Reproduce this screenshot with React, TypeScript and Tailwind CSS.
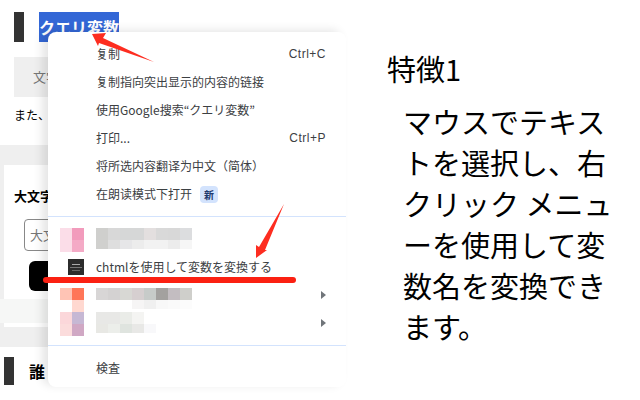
import React from 'react';

const font = { fontFamily: '"Noto Sans CJK JP", sans-serif' };

const Row = ({ label, shortcut, badge }: { label: string; shortcut?: string; badge?: string }) => (
  <div className="flex h-[28px] items-center justify-between pl-[48px] pr-[20px] text-[12px] text-[#3c4043]">
    <span className="flex items-center gap-[8px]">
      {label}
      {badge && (
        <span className="rounded-[4px] bg-[#d3e3fd] px-[4px] text-[10px] leading-[17px] font-bold text-[#1f3a6e]">{badge}</span>
      )}
    </span>
    {shortcut && <span className="font-['Liberation_Sans'] text-[12px] tracking-[0.5px]">{shortcut}</span>}
  </div>
);

const Mosaic = ({ colors, height }: { colors: string[]; height: number }) => (
  <div className="flex">
    {colors.map((c, i) => (
      <div key={i} style={{ background: c, width: 12, height }} />
    ))}
  </div>
);

const Icon = ({ colors }: { colors: string[] }) => (
  <div className="ml-[12px] flex w-[24px] flex-wrap">
    {colors.map((c, i) => (
      <div key={i} className="h-[12px] w-[12px]" style={{ background: c }} />
    ))}
  </div>
);

const BlurRow = ({ icon, top, bottom, arrow, pad }: { icon: string[]; top: string[]; bottom: string[]; arrow?: boolean; pad: string }) => (
  <div className={`relative flex h-[28px] items-start gap-[12px] ${pad}`}>
    <Icon colors={icon} />
    <div>
      <Mosaic colors={top} height={12} />
      <Mosaic colors={bottom} height={9} />
    </div>
    {arrow && (
      <div className="absolute right-[20px] top-[10px] h-0 w-0 border-y-[4px] border-l-[5px] border-y-transparent border-l-[#70757a]" />
    )}
  </div>
);

export default function App() {
  return (
    <div className="flex h-[400px] w-[640px] overflow-hidden bg-white text-black" style={font}>
      <div className="relative h-full w-[370px] shrink-0 overflow-hidden">
        {/* page behind the menu */}
        <div className="flex items-center gap-[15px] pl-[14px] pt-[12px]">
          <div className="h-[30px] w-[10px] bg-[#333]" />
          <span className="bg-[#3367d6] text-[16px] font-bold leading-[30px] text-white">クエリ変数</span>
        </div>
        <div className="ml-[14px] mt-[15px] flex h-[40px] w-[120px] items-center bg-[#efefef] pl-[19px] text-[13px] text-[#777]">文字</div>
        <p className="ml-[14px] mt-[8px] text-[12px] leading-[20px]">また、</p>
        <div className="mt-[20px] h-[202px] w-[200px] bg-[#efefef] pl-[4px] pt-[20px]">
          <div className="relative h-[162px] w-[180px] bg-white pl-[10px] pt-[22px]">
            <p className="text-[13px] font-bold leading-[18px]">大文字</p>
            <div className="ml-[10px] mt-[14px] flex h-[32px] w-[60px] items-center rounded-[4px] border border-[#888] pl-[5px] text-[13px] text-[#777]">大文</div>
            <div className="ml-[15px] mt-[10px] h-[30px] w-[40px] rounded-[6px] bg-black" />
            {/* smudge over the bottom of the card */}
            <div className="absolute left-[-4px] top-[134px] h-[24px] w-[50px] bg-[#f6f7f6]" />
          </div>
        </div>
        <div className="ml-[4px] mt-[10px] flex items-center gap-[15px]">
          <div className="h-[28px] w-[10px] bg-[#333]" />
          <span className="text-[16px] font-bold">誰</span>
        </div>

        {/* context menu */}
        <div className="absolute left-[48px] top-[32px] h-[355px] w-[298px] rounded-[8px] bg-white py-[8px] shadow-[-6px_-2px_10px_rgba(0,0,0,0.1)]">
          <Row label="复制" shortcut="Ctrl+C" />
          <Row label="复制指向突出显示的内容的链接" />
          <Row label="使用Google搜索“クエリ変数”" />
          <Row label="打印..." shortcut="Ctrl+P" />
          <Row label="将所选内容翻译为中文（简体）" />
          <Row label="在朗读模式下打开" badge="新" />
          <div className="my-[8px] border-t border-[#d3e3fd]" />
          <BlurRow
            pad="pt-[3px]"
            icon={['#fbdde8', '#f29bbc', '#fbdde8', '#f4aac6']}
            top={['#cfcfcd', '#d8d8d8', '#d6d7d7', '#d6d7d7', '#e3dfdf', '#d9d9d9', '#d8d8d8', '#dcdddf']}
            bottom={['#d0d0ce', '#dedede', '#e6e6e8', '#ececec', '#f2f2f2', '#f2f2f2', '#ececec', '#f6f6f6']}
          />
          <div className="flex h-[28px] items-center gap-[12px] text-[12px] text-[#3c4043]">
            <div className="ml-[20px] flex h-[16px] w-[16px] flex-col items-center justify-center gap-[2px] bg-[#2c2c2c]">
              <div className="h-px w-[8px] bg-[#aaa]" />
              <div className="h-px w-[12px] bg-[#777]" />
              <div className="h-px w-[8px] bg-[#666]" />
            </div>
            chtmlを使用して変数を変換する
          </div>
          <BlurRow
            pad="pt-[7px]"
            icon={['#ffc4b5', '#ff7658', '#ffffff', '#ffd8d0']}
            top={['#d8d6d6', '#d4d2d2', '#d8d8d4', '#d6cfd0', '#c7cbc9', '#a3a19f', '#c3bdc1', '#cfcfcb']}
            bottom={['#ffffff', '#ffffff', '#ffffff', '#f6f5f5', '#f0f0f0', '#f8f8f8', '#fafafa', '#fcfcfc']}
            arrow
          />
          <BlurRow
            pad="pt-[3px]"
            icon={['#fbd7da', '#c6b8d4', '#fbdcdc', '#d0a8c4']}
            top={['#e8e8e6', '#e8e8e6', '#eaece8', '#f4f4f2', '#ffffff']}
            bottom={['#e8e8e4', '#eceeea', '#dfe4df', '#e8e8e6', '#f8f8fa']}
            arrow
          />
          <div className="my-[8px] border-t border-[#d3e3fd]" />
          <Row label="検査" />
        </div>

        {/* red annotations */}
        <svg className="absolute left-0 top-0" width="370" height="400" viewBox="0 0 370 400">
          <polygon points="92,34 106,33 103,38 154,62 99,43 98,46" fill="#fd2d20" />
          <polygon points="284,204 265,250 267,250 256,258 256,245 259,247" fill="#fd2d20" />
          <line x1="46" y1="280" x2="293" y2="280" stroke="#fb2012" strokeWidth="6" strokeLinecap="round" />
        </svg>
      </div>

      {/* feature text */}
      <div className="pl-[17px] pt-[47px]">
        <h2 className="text-[29px] font-normal leading-[42px]">特徴1</h2>
        <p className="ml-[16px] mt-[12px] w-[220px] text-[29px] leading-[41px]">
          マウスでテキストを選択し、右クリック メニューを使用して変数名を変換できます。
        </p>
      </div>
    </div>
  );
}
